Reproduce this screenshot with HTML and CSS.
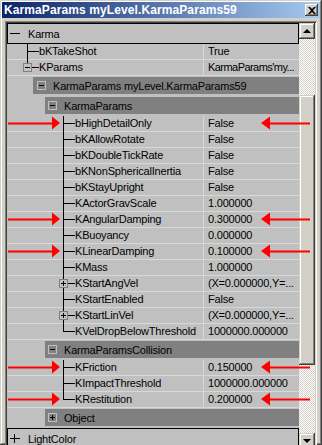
FILE: index.html
```html
<!DOCTYPE html>
<html lang="en">
<head>
    <meta charset="UTF-8">
    <title>KarmaParams myLevel.KarmaParams59</title>
    <link rel="stylesheet" href="styles.css">
</head>
<body>

<div class="window">
    <!-- title bar -->
    <div class="titlebar">
        <span class="title">KarmaParams myLevel.KarmaParams59</span>
        <span class="close-btn">
            <svg width="8" height="7" viewBox="0 0 8 7"><path d="M0 0h2l2 2 2-2h2L5 3.5 8 7H6L4 5 2 7H0l3-3.5z" fill="#000"/></svg>
        </span>
    </div>

    <div class="client">
        <div class="listbox">
            <div class="props">

                <div class="cat"><span class="sign minus"></span>Karma</div>

                <div class="row">
                    <div class="name lv1"><span class="branch"></span><span class="label">bKTakeShot</span></div>
                    <div class="value">True</div>
                </div>
                <div class="row">
                    <div class="name lv1"><span class="branch last"><span class="pm minus"></span></span><span class="label">KParams</span></div>
                    <div class="value tight">KarmaParams'my...</div>
                </div>

                <div class="group g1"><div class="band"><span class="pm minus"></span>KarmaParams myLevel.KarmaParams59</div></div>
                <div class="group g2"><div class="band"><span class="pm minus"></span>KarmaParams</div></div>

                <div class="row">
                    <div class="name lv3"><span class="branch"></span><span class="label">bHighDetailOnly</span></div>
                    <div class="value">False</div>
                </div>
                <div class="row">
                    <div class="name lv3"><span class="branch"></span><span class="label">bKAllowRotate</span></div>
                    <div class="value">False</div>
                </div>
                <div class="row">
                    <div class="name lv3"><span class="branch"></span><span class="label">bKDoubleTickRate</span></div>
                    <div class="value">False</div>
                </div>
                <div class="row">
                    <div class="name lv3"><span class="branch"></span><span class="label">bKNonSphericalInertia</span></div>
                    <div class="value">False</div>
                </div>
                <div class="row">
                    <div class="name lv3"><span class="branch"></span><span class="label">bKStayUpright</span></div>
                    <div class="value">False</div>
                </div>
                <div class="row">
                    <div class="name lv3"><span class="branch"></span><span class="label">KActorGravScale</span></div>
                    <div class="value">1.000000</div>
                </div>
                <div class="row">
                    <div class="name lv3"><span class="branch"></span><span class="label">KAngularDamping</span></div>
                    <div class="value">0.300000</div>
                </div>
                <div class="row">
                    <div class="name lv3"><span class="branch"></span><span class="label">KBuoyancy</span></div>
                    <div class="value">0.000000</div>
                </div>
                <div class="row">
                    <div class="name lv3"><span class="branch"></span><span class="label">KLinearDamping</span></div>
                    <div class="value">0.100000</div>
                </div>
                <div class="row">
                    <div class="name lv3"><span class="branch"></span><span class="label">KMass</span></div>
                    <div class="value">1.000000</div>
                </div>
                <div class="row">
                    <div class="name lv3"><span class="branch"><span class="pm plus"></span></span><span class="label">KStartAngVel</span></div>
                    <div class="value">(X=0.000000,Y=...</div>
                </div>
                <div class="row">
                    <div class="name lv3"><span class="branch"></span><span class="label">KStartEnabled</span></div>
                    <div class="value">False</div>
                </div>
                <div class="row">
                    <div class="name lv3"><span class="branch"><span class="pm plus"></span></span><span class="label">KStartLinVel</span></div>
                    <div class="value">(X=0.000000,Y=...</div>
                </div>
                <div class="row">
                    <div class="name lv3"><span class="branch last"></span><span class="label">KVelDropBelowThreshold</span></div>
                    <div class="value">1000000.000000</div>
                </div>

                <div class="group g2"><div class="band"><span class="pm minus"></span>KarmaParamsCollision</div></div>

                <div class="row">
                    <div class="name lv3"><span class="branch"></span><span class="label">KFriction</span></div>
                    <div class="value">0.150000</div>
                </div>
                <div class="row">
                    <div class="name lv3"><span class="branch"></span><span class="label">KImpactThreshold</span></div>
                    <div class="value">1000000.000000</div>
                </div>
                <div class="row">
                    <div class="name lv3"><span class="branch last"></span><span class="label">KRestitution</span></div>
                    <div class="value">0.200000</div>
                </div>

                <div class="group g2"><div class="band"><span class="pm plus"></span>Object</div></div>

                <div class="cat"><span class="sign plus"></span>LightColor</div>
            </div>

            <!-- vertical scrollbar -->
            <div class="scrollbar">
                <div class="sb-btn"><span class="tri up"></span></div>
                <div class="sb-track"><div class="sb-thumb"></div></div>
                <div class="sb-btn"><span class="tri down"></span></div>
            </div>
        </div>
    </div>

    <!-- red marker arrows drawn over the list -->
    <svg class="marks" width="322" height="445" viewBox="0 0 322 445">
        <g fill="#f00">
            <path d="M8 122.5h44v-6l8 6.5-8 6.5v-5H8z"/>
            <path d="M310 122.5h-40v-6l-9 6.5 9 6.5v-5h40z"/>
            <path d="M8 218.5h44v-6l8 6.5-8 6.5v-5H8z"/>
            <path d="M310 218.5h-40v-6l-9 6.5 9 6.5v-5h40z"/>
            <path d="M8 250.5h44v-6l8 6.5-8 6.5v-5H8z"/>
            <path d="M310 250.5h-40v-6l-9 6.5 9 6.5v-5h40z"/>
            <path d="M8 366.5h44v-6l8 6.5-8 6.5v-5H8z"/>
            <path d="M310 366.5h-40v-6l-9 6.5 9 6.5v-5h40z"/>
            <path d="M8 398.5h44v-6l8 6.5-8 6.5v-5H8z"/>
            <path d="M310 398.5h-40v-6l-9 6.5 9 6.5v-5h40z"/>
        </g>
    </svg>
</div>

</body>
</html>
```

FILE: styles.css
```css
/* page */
body {
    margin: 0;
    background-color: #d4d0c8;
    font-family: "Liberation Sans", Arial, sans-serif;
    font-size: 11px;
    letter-spacing: -0.2px;
    color: #000;
}

/* window frame */
.window {
    position: relative;
    width: 322px;
    height: 445px;
    box-sizing: border-box;
    padding: 2px;
    display: flex;
    flex-direction: column;
    background-color: #d4d0c8;
    box-shadow: inset -1px -1px #404040, inset 1px 1px #d4d0c8,
                inset -2px -2px #808080, inset 2px 2px #fff;
}

.titlebar {
    height: 16px;
    flex: none;
    display: flex;
    align-items: center;
    justify-content: space-between;
    padding: 0 2px 0 2px;
    background: linear-gradient(to right, #0a246a, #a6caf0);
}

.title {
    font-weight: bold;
    font-size: 12px;
    letter-spacing: 0.1px;
    color: #fff;
}

.close-btn {
    width: 13px;
    height: 12px;
    display: flex;
    align-items: center;
    justify-content: center;
    background-color: #d4d0c8;
    box-shadow: inset -1px -1px #404040, inset 1px 1px #fff, inset -2px -2px #808080;
}

.client {
    flex: 1;
    display: flex;
    padding: 3px 3px 0 3px;
}

/* sunken list box */
.listbox {
    flex: 1;
    display: flex;
    padding: 1px;
    border: 1px solid;
    border-color: #808080 #fff #fff #808080;
    box-shadow: inset 1px 1px #404040, inset -1px -1px #d4d0c8;
}

.props {
    flex: 1;
    overflow: hidden;
    background-color: #c0c0c0;
}

/* top level categories */
.cat {
    height: 21px;
    box-sizing: border-box;
    border: 1px solid #000;
    display: flex;
    align-items: center;
}

.cat .sign {
    width: 10px;
    height: 9px;
    margin: 0 8px 0 2px;
    background: linear-gradient(#000, #000) 0 4px / 10px 1px no-repeat;
}

.cat .sign.plus {
    background: linear-gradient(#000, #000) 0 4px / 10px 1px no-repeat,
                linear-gradient(#000, #000) 4px 0 / 1px 9px no-repeat;
}

/* property rows */
.row {
    display: grid;
    grid-template-columns: 197px 1fr;
    height: 16px;
    background: linear-gradient(#d8d8d8, #d8d8d8) 0 100% / 100% 1px no-repeat;
}

.name {
    display: flex;
    box-sizing: border-box;
    border-right: 1px solid #d8d8d8;
}

.name.lv1 {
    padding-left: 16px;
}

.name.lv3 {
    padding-left: 52px;
}

.label,
.value {
    line-height: 15px;
    white-space: nowrap;
}

.value {
    padding-left: 4px;
    overflow: hidden;
}

.value.tight {
    letter-spacing: -0.55px;
}

/* tree connector lines */
.branch {
    width: 16px;
    flex: none;
    background: linear-gradient(#000, #000) 4px 0 / 1px 100% no-repeat,
                linear-gradient(#000, #000) 4px 7px / 12px 1px no-repeat;
}

.branch.last {
    background: linear-gradient(#000, #000) 4px 0 / 1px 8px no-repeat,
                linear-gradient(#000, #000) 4px 7px / 12px 1px no-repeat;
}

/* expand / collapse boxes */
.pm {
    display: block;
    width: 9px;
    height: 9px;
    box-sizing: border-box;
    border: 1px solid #808080;
    background: linear-gradient(#000, #000) 1px 3px / 5px 1px no-repeat, #c0c0c0;
}

.branch .pm {
    margin-top: 3px;
}

.pm.plus {
    background: linear-gradient(#000, #000) 1px 3px / 5px 1px no-repeat,
                linear-gradient(#000, #000) 3px 1px / 1px 5px no-repeat, #c0c0c0;
}

/* object groups */
.group {
    height: 20px;
    box-sizing: border-box;
    padding: 1px 0 2px;
}

.band {
    height: 17px;
    display: flex;
    align-items: center;
    background-color: #808080;
    white-space: nowrap;
}

.g1 .band {
    margin-left: 26px;
    padding-left: 4px;
}

.g2 .band {
    margin-left: 38px;
    padding-left: 3px;
}

.band .pm {
    margin-right: 7px;
    border-color: #c0c0c0;
    background-color: #808080;
}

.band .pm.minus {
    background: linear-gradient(#000, #000) 1px 3px / 5px 1px no-repeat, #808080;
}

.band .pm.plus {
    background: linear-gradient(#000, #000) 1px 3px / 5px 1px no-repeat,
                linear-gradient(#000, #000) 3px 1px / 1px 5px no-repeat, #808080;
}

/* scrollbar */
.scrollbar {
    width: 16px;
    flex: none;
    display: flex;
    flex-direction: column;
}

.sb-btn,
.sb-thumb {
    background-color: #d4d0c8;
    box-shadow: inset -1px -1px #404040, inset 1px 1px #d4d0c8,
                inset -2px -2px #808080, inset 2px 2px #fff;
}

.sb-btn {
    height: 16px;
    flex: none;
    display: flex;
    align-items: center;
    justify-content: center;
}

.tri {
    width: 0;
    height: 0;
    border-left: 4px solid transparent;
    border-right: 4px solid transparent;
}

.tri.up {
    border-bottom: 4px solid #000;
}

.tri.down {
    border-top: 4px solid #000;
}

.sb-track {
    flex: 1;
    display: flex;
    flex-direction: column;
    background: repeating-conic-gradient(#fff 0 25%, #d4d0c8 0 50%) 0 0 / 2px 2px;
}

.sb-thumb {
    margin-top: 56px;
    height: 270px;
}

/* red arrows over the list */
.marks {
    position: absolute;
    top: 0;
    left: 0;
    pointer-events: none;
}
```
